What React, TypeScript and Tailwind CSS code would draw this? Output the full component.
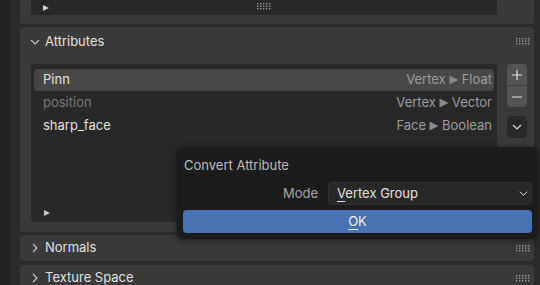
import type { ReactNode } from 'react';

const font = { fontFamily: 'Inter, "Noto Sans", "DejaVu Sans", sans-serif' };

function Grip() {
    const dots: ReactNode[] = [];
    for (let r = 0; r < 3; r++) {
        for (let c = 0; c < 5; c++) {
            dots.push(<rect key={`${r}-${c}`} x={c * 3} y={r * 2.5} width={1.4} height={1.4} fill="#9a9a9a" />);
        }
    }
    return (
        <svg width="14" height="7" viewBox="0 0 14 7">
            {dots}
        </svg>
    );
}

function Chevron({ dir, color = '#c8c8c8', size = 10 }: { dir: 'down' | 'right'; color?: string; size?: number }) {
    return (
        <svg width={size} height={size} viewBox="0 0 10 10">
            {dir === 'down'
                ? <polyline points="1,3 5,7 9,3" fill="none" stroke={color} strokeWidth="1.1" />
                : <polyline points="3,1 7,5 3,9" fill="none" stroke={color} strokeWidth="1.1" />}
        </svg>
    );
}

function PlayTri({ color = '#d0d0d0' }: { color?: string }) {
    return (
        <svg width="8" height="8" viewBox="0 0 8 8">
            <polygon points="1,1 7,4 1,7" fill={color} />
        </svg>
    );
}

function Arrow() {
    return (
        <svg width="10" height="10" viewBox="0 0 10 10" className="mx-[3px]">
            <polygon points="0.5,0.5 9.5,5 0.5,9.5" fill="#8a8a8a" />
        </svg>
    );
}

const rows = [
    { name: 'Pinn', domain: 'Vertex', type: 'Float', active: true, dim: false },
    { name: 'position', domain: 'Vertex', type: 'Vector', active: false, dim: true },
    { name: 'sharp_face', domain: 'Face', type: 'Boolean', active: false, dim: false },
];

function ClosedPanel({ title }: { title: string }) {
    return (
        <div className="h-[26px] shrink-0 bg-[#3a3a3a] rounded-[4px] flex items-center pl-[10px] pr-[4px]">
            <Chevron dir="right" />
            <span className="ml-[5px] text-[13px] text-[#e0e0e0]">{title}</span>
            <div className="ml-auto"><Grip /></div>
        </div>
    );
}

export default function App() {
    return (
        <div className="relative w-[540px] h-[285px] overflow-hidden flex bg-[#2b2b2b]" style={font}>
            <div className="w-[10px] bg-[#222222] shrink-0" />
            <div className="flex-1 flex flex-col pl-[10px] pr-[6px]">
                {/* previous panel tail */}
                <div className="h-[24px] shrink-0 bg-[#3a3a3a] rounded-b-[4px] pl-[11px] pr-[37px]">
                    <div className="h-[15px] bg-[#282828] rounded-b-[3px] relative flex items-center pl-[11px]">
                        <PlayTri />
                        <div className="absolute left-1/2 top-[3px] -translate-x-1/2"><Grip /></div>
                    </div>
                </div>

                {/* Attributes */}
                <div className="mt-[3px] h-[205px] shrink-0 bg-[#3a3a3a] rounded-[4px] flex flex-col">
                    <div className="h-[29px] flex items-center pl-[10px] pr-[4px]">
                        <Chevron dir="down" />
                        <span className="ml-[5px] text-[13px] text-[#e0e0e0]">Attributes</span>
                        <div className="ml-auto"><Grip /></div>
                    </div>
                    <div className="flex mt-[8px] pl-[11px]">
                        <div className="w-[466px] h-[158px] bg-[#282828] rounded-[4px] flex flex-col px-[3px] pt-[5px] relative">
                            {rows.map((r) => (
                                <div
                                    key={r.name}
                                    className={`h-[22px] mb-[1px] flex items-center pl-[9px] pr-[2px] rounded-[3px] text-[13px] ${r.active ? 'bg-[#474747]' : ''}`}
                                >
                                    <span className={r.dim ? 'text-[#7a7a7a]' : 'text-[#e2e2e2]'}>{r.name}</span>
                                    <span className="ml-auto flex items-center text-[#9c9c9c]">
                                        {r.domain}
                                        <Arrow />
                                        {r.type}
                                    </span>
                                </div>
                            ))}
                            <div className="mt-auto h-[18px] flex items-center pl-[9px] relative">
                                <PlayTri color="#c8c8c8" />
                                <div className="absolute left-1/2 top-[6px] -translate-x-1/2"><Grip /></div>
                            </div>
                        </div>
                        <div className="ml-[10px] flex flex-col">
                            <div className="w-[20px] rounded-[4px] overflow-hidden flex flex-col gap-[1px] bg-[#3a3a3a]">
                                <div className="h-[21px] bg-[#545454] flex items-center justify-center">
                                    <svg width="12" height="12" viewBox="0 0 12 12">
                                        <path d="M6 1v10M1 6h10" stroke="#e0e0e0" strokeWidth="1.2" />
                                    </svg>
                                </div>
                                <div className="h-[21px] bg-[#545454] flex items-center justify-center">
                                    <svg width="12" height="12" viewBox="0 0 12 12">
                                        <path d="M1 6h10" stroke="#e0e0e0" strokeWidth="1.2" />
                                    </svg>
                                </div>
                            </div>
                            <div className="mt-[9px] w-[20px] h-[22px] rounded-[4px] bg-[#282828] flex items-center justify-center">
                                <Chevron dir="down" color="#e0e0e0" />
                            </div>
                        </div>
                    </div>
                </div>

                <div className="mt-[3px]"><ClosedPanel title="Normals" /></div>
                <div className="mt-[4px]"><ClosedPanel title="Texture Space" /></div>
            </div>

            {/* Convert Attribute popup */}
            <div className="absolute left-[177px] top-[147px] w-[361px] h-[92px] bg-[#1c1c1c] rounded-[6px] shadow-[0_2px_6px_rgba(0,0,0,0.5)] flex flex-col px-[6px]">
                <div className="h-[33px] flex items-center pl-[1px] pt-[4px] text-[13px] text-[#bcbcbc]">Convert Attribute</div>
                <div className="mt-[2px] h-[23px] flex items-center">
                    <span className="w-[135px] text-right text-[13px] text-[#a4a4a4]">Mode</span>
                    <div className="ml-[10px] w-[204px] h-[23px] bg-[#282828] border border-[#333333] rounded-[4px] flex items-center pl-[8px] pr-[3px] text-[13px] text-[#e2e2e2]">
                        <span><span className="underline underline-offset-[3px]">V</span>ertex Group</span>
                        <span className="ml-auto"><Chevron dir="down" color="#e0e0e0" size={9} /></span>
                    </div>
                </div>
                <div className="mt-[5px] h-[23px] bg-[#4772b3] rounded-[4px] flex items-center justify-center text-[13px] text-[#f2f2f2]">
                    <span><span className="underline underline-offset-[3px]">O</span>K</span>
                </div>
            </div>
        </div>
    );
}
